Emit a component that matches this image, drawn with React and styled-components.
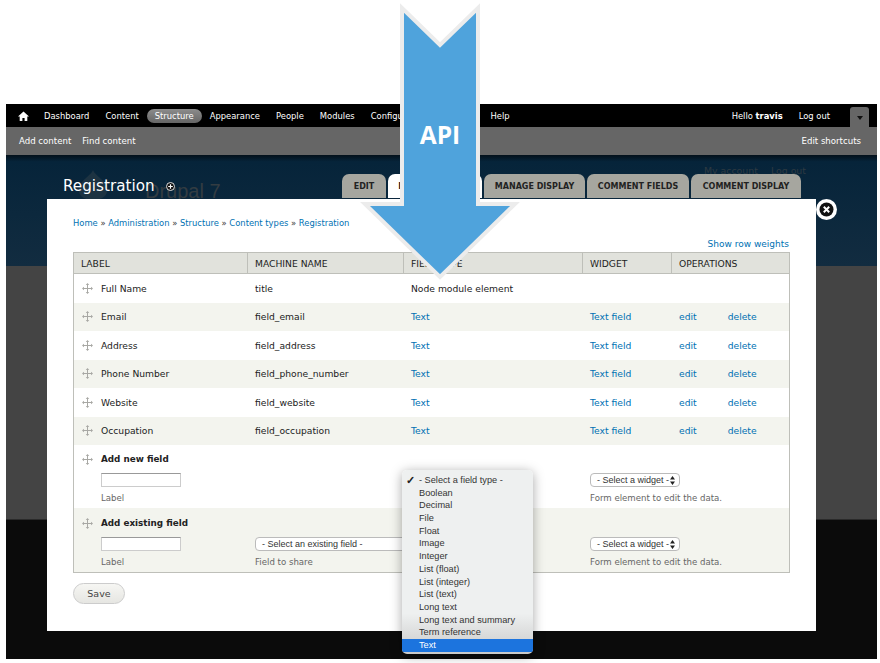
import React from "react";
import styled, { createGlobalStyle } from "styled-components";

const Global = createGlobalStyle`
  body {
    margin: 0;
    background: #fff;
    font-family: "DejaVu Sans", sans-serif;
  }
`;

const Page = styled.div`
  position: relative;
  width: 880px;
  height: 663px;
  padding: 104px 3px 4px 6px;
  box-sizing: border-box;
  overflow: hidden;
`;

const Frame = styled.div`
  position: relative;
  height: 555px;
  display: flex;
  flex-direction: column;
  background: #0b0b0b;
`;

const Toolbar = styled.div`
  height: 23px;
  flex: none;
  background: #000;
  display: flex;
  align-items: center;
  padding: 0 8px 0 12px;
  font-size: 8.4px;
  color: #fff;
`;

const NavItem = styled.span`
  padding: 2px 8px;
  margin-right: ${(p) => p.$gap || 0}px;
  border-radius: 9px;
  background: ${(p) => (p.$active ? "linear-gradient(#8c8c8c, #666)" : "none")};
`;

const Home = styled.span`
  display: flex;
  margin-right: 7px;
`;

const Spacer = styled.div`
  flex: 1;
`;

const ToggleBtn = styled.div`
  width: 19px;
  height: 20px;
  margin-left: 12px;
  margin-top: 3px;
  background: #666;
  border-radius: 3px 3px 0 0;
  display: flex;
  align-items: center;
  justify-content: center;
  &::after {
    content: "";
    border: 3px solid transparent;
    border-top: 4px solid #111;
    margin-top: 5px;
  }
`;

const Shortcuts = styled.div`
  height: 28px;
  flex: none;
  background: #666;
  display: flex;
  align-items: center;
  justify-content: space-between;
  padding: 0 16px 0 13px;
  font-size: 8.6px;
  color: #fff;
`;

const ShortcutLinks = styled.div`
  display: flex;
  gap: 11px;
`;

const Header = styled.div`
  position: relative;
  height: 111px;
  flex: none;
  background: linear-gradient(#03101a 0, #06243a 6%, #122c40 100%);
`;

const Title = styled.h1`
  position: absolute;
  left: 57px;
  top: 22px;
  margin: 0;
  font-size: 15.2px;
  font-weight: normal;
  color: #fff;
  display: flex;
  align-items: center;
  gap: 11px;
`;

const GhostLogo = styled.svg`
  position: absolute;
  left: 68px;
  top: 15px;
`;

const Ghost = styled.div`
  position: absolute;
  left: 139px;
  top: 25px;
  font-family: "Liberation Sans", sans-serif;
  font-size: 20px;
  color: #333c42;
`;

const GhostLinks = styled.div`
  position: absolute;
  right: 71px;
  top: 10px;
  display: flex;
  gap: 13px;
  font-size: 9.4px;
  color: #2e3a42;
`;

const Tabs = styled.div`
  position: absolute;
  left: 336px;
  top: 19px;
  display: flex;
  gap: 2px;
`;

const Tab = styled.div`
  width: ${(p) => p.$w}px;
  height: 24px;
  border-radius: 7px 7px 0 0;
  background: ${(p) => (p.$active ? "#fff" : "#a6a69f")};
  display: flex;
  align-items: center;
  justify-content: center;
  font-size: 8px;
  font-weight: bold;
  color: #222;
`;

const GrayBand = styled.div`
  height: 254px;
  flex: none;
  background: #444;
  border-bottom: 1px solid #2a2a2a;
  box-sizing: border-box;
`;

const Overlay = styled.div`
  position: absolute;
  left: 41px;
  top: 95px;
  width: 769px;
  height: 432px;
  box-sizing: border-box;
  background: #fff;
  padding: 18px 26px 0;
  color: #222;
  font-size: 9.2px;
`;

const Close = styled.div`
  position: absolute;
  right: -21px;
  top: 0;
  width: 21px;
  height: 21px;
  background: #fff;
  border-radius: 50%;
  display: flex;
  align-items: center;
  justify-content: center;
`;

const Crumbs = styled.div`
  color: #0071b3;
  height: 16px;
  font-size: 8.4px;
  line-height: 12px;
  i {
    font-style: normal;
    color: #333;
  }
`;

const Weights = styled.div`
  color: #0071b3;
  text-align: right;
  margin: 4px 1px 0 0;
  height: 15px;
  line-height: 15px;
  font-size: 9px;
`;

const Table = styled.div`
  border: 1px solid #bebfb9;
`;

const columns = "173px 156px 179px 89px 1fr";

const HeadRow = styled.div`
  display: grid;
  grid-template-columns: ${columns};
  height: 20px;
  background: #e1e2dc;
  border-bottom: 1px solid #bebfb9;
`;

const HeadCell = styled.div`
  display: flex;
  align-items: center;
  padding-left: 7px;
  border-left: ${(p) => (p.$first ? "none" : "1px solid #bebfb9")};
`;

const Row = styled.div`
  display: grid;
  grid-template-columns: ${columns};
  height: ${(p) => p.$h || 28.5}px;
  background: ${(p) => (p.$even ? "#f3f4ee" : "#fff")};
`;

const Cell = styled.div`
  display: flex;
  align-items: ${(p) => (p.$top ? "flex-start" : "center")};
  padding-left: 8px;
  color: ${(p) => (p.$link ? "#0071b3" : "inherit")};
`;

const LabelCell = styled(Cell)`
  gap: 8px;
`;

const AddCell = styled(Cell)`
  padding-left: 27px;
`;

const Ops = styled(Cell)`
  gap: 31px;
  color: #0071b3;
`;

const Stack = styled.div`
  display: flex;
  flex-direction: column;
  align-items: flex-start;
  padding-top: ${(p) => p.$pt || 8}px;
`;

const FieldTitle = styled.div`
  display: flex;
  align-items: center;
  gap: 8px;
  margin-left: -19px;
  font-weight: bold;
  font-size: 8.8px;
  height: 12px;
`;

const Input = styled.div`
  width: 80px;
  height: 14px;
  box-sizing: border-box;
  margin-top: 8px;
  background: #fff;
  border: 1px solid #ccc;
  border-top-color: #999;
`;

const Hint = styled.div`
  margin-top: 6px;
  font-size: 8.6px;
  color: #666;
  white-space: nowrap;
`;

const NativeSelect = styled.div`
  width: ${(p) => p.$w}px;
  height: 14px;
  margin-top: 20px;
  box-sizing: border-box;
  background: #fff;
  border: 1px solid #bbb;
  border-radius: 4px;
  display: flex;
  align-items: center;
  justify-content: space-between;
  padding: 0 4px 0 6px;
  font-family: "Liberation Sans", sans-serif;
  font-size: 9px;
  color: #333;
`;

const Save = styled.div`
  width: 52px;
  height: 21px;
  margin-top: 10px;
  box-sizing: border-box;
  border: 1px solid #ccc;
  border-radius: 11px;
  background: linear-gradient(#f6f6f3, #e6e6e2);
  display: flex;
  align-items: center;
  justify-content: center;
  font-size: 9.5px;
  color: #444;
`;

const Menu = styled.div`
  position: absolute;
  left: 396px;
  top: 366px;
  width: 131px;
  height: 184px;
  box-sizing: border-box;
  padding-top: 4px;
  border-radius: 5px;
  background: linear-gradient(#eef0f0 0, #eef0f0 78%, #c9c9c9 100%);
  box-shadow: 0 2px 12px rgba(0, 0, 0, 0.35);
  overflow: hidden;
  font-family: "Liberation Sans", sans-serif;
  font-size: 9.2px;
  color: #333;
`;

const MenuItem = styled.div`
  position: relative;
  height: 12.7px;
  line-height: 12.7px;
  padding-left: 17px;
  background: ${(p) => (p.$selected ? "#1c74de" : "none")};
  color: ${(p) => (p.$selected ? "#fff" : "inherit")};
`;

const Check = styled.span`
  position: absolute;
  left: 4px;
  top: 0;
  font-size: 11px;
  font-weight: bold;
  color: #222;
`;

const Arrow = styled.svg`
  position: absolute;
  left: 355px;
  top: 0;
`;

const ArrowLabel = styled.div`
  position: absolute;
  left: 401px;
  top: 118px;
  width: 78px;
  text-align: center;
  font-family: "Open Sans", sans-serif;
  font-weight: 700;
  font-size: 24.5px;
  color: #fff;
`;

const HomeIcon = () => (
  <svg width="11" height="10" viewBox="0 0 11 10" fill="#fff">
    <path d="M5.5 0.5 L11 5.5 H9.3 V10 H6.6 V7 H4.4 V10 H1.7 V5.5 H0 Z" />
  </svg>
);

const Move = () => (
  <svg width="11" height="11" viewBox="0 0 11 11" fill="#a8a8a4" style={{ flex: "none" }}>
    <path d="M5.5 0 L7.2 2 H6 V5 H9 V3.8 L11 5.5 L9 7.2 V6 H6 V9 H7.2 L5.5 11 L3.8 9 H5 V6 H2 V7.2 L0 5.5 L2 3.8 V5 H5 V2 H3.8 Z" />
  </svg>
);

const Updown = () => (
  <svg width="5" height="9" viewBox="0 0 5 9" fill="#222">
    <path d="M2.5 0 L5 3.5 H0 Z M2.5 9 L5 5.5 H0 Z" />
  </svg>
);

const rows = [
  ["Email", "field_email"],
  ["Address", "field_address"],
  ["Phone Number", "field_phone_number"],
  ["Website", "field_website"],
  ["Occupation", "field_occupation"],
];

const menuItems = [
  "Boolean",
  "Decimal",
  "File",
  "Float",
  "Image",
  "Integer",
  "List (float)",
  "List (integer)",
  "List (text)",
  "Long text",
  "Long text and summary",
  "Term reference",
];

const App = () => {
  return (
    <Page>
      <Global />
      <Frame>
        <Toolbar>
          <Home>
            <HomeIcon />
          </Home>
          <NavItem>Dashboard</NavItem>
          <NavItem>Content</NavItem>
          <NavItem $active>Structure</NavItem>
          <NavItem>Appearance</NavItem>
          <NavItem>People</NavItem>
          <NavItem>Modules</NavItem>
          <NavItem $gap={47}>Configuration</NavItem>
          <NavItem>Help</NavItem>
          <Spacer />
          <NavItem>
            Hello <b>travis</b>
          </NavItem>
          <NavItem>Log out</NavItem>
          <ToggleBtn />
        </Toolbar>
        <Shortcuts>
          <ShortcutLinks>
            <span>Add content</span>
            <span>Find content</span>
          </ShortcutLinks>
          <div>Edit shortcuts</div>
        </Shortcuts>
        <Header>
          <GhostLogo width="38" height="30" viewBox="0 0 38 30">
            <path d="M19 0 C21 6 33 10 33 21 C33 27 26 30 19 30 C12 30 5 27 5 21 C5 10 17 6 19 0 Z" fill="#1d3342" />
          </GhostLogo>
          <Ghost>Drupal 7</Ghost>
          <GhostLinks>
            <span>My account</span>
            <span>Log out</span>
          </GhostLinks>
          <Title>
            Registration
            <svg width="9" height="9" viewBox="0 0 9 9">
              <circle cx="4.5" cy="4.5" r="4" fill="#111" stroke="#ddd" />
              <path d="M4.5 2.2 V6.8 M2.2 4.5 H6.8" stroke="#fff" strokeWidth="1.2" />
            </svg>
          </Title>
          <Tabs>
            <Tab $w={44}>EDIT</Tab>
            <Tab $w={94} $active>
              MANAGE FIELDS
            </Tab>
            <Tab $w={101}>MANAGE DISPLAY</Tab>
            <Tab $w={102}>COMMENT FIELDS</Tab>
            <Tab $w={110}>COMMENT DISPLAY</Tab>
          </Tabs>
        </Header>
        <GrayBand />
        <Overlay>
          <Close>
            <svg width="15" height="15" viewBox="0 0 15 15">
              <circle cx="7.5" cy="7.5" r="7" fill="#111" />
              <path d="M4.8 4.8 L10.2 10.2 M10.2 4.8 L4.8 10.2" stroke="#fff" strokeWidth="2" />
            </svg>
          </Close>
          <Crumbs>
            Home <i>»</i> Administration <i>»</i> Structure <i>»</i> Content types <i>»</i> Registration
          </Crumbs>
          <Weights>Show row weights</Weights>
          <Table>
            <HeadRow>
              <HeadCell $first>LABEL</HeadCell>
              <HeadCell>MACHINE NAME</HeadCell>
              <HeadCell>FIELD TYPE</HeadCell>
              <HeadCell>WIDGET</HeadCell>
              <HeadCell>OPERATIONS</HeadCell>
            </HeadRow>
            <Row>
              <LabelCell>
                <Move />
                Full Name
              </LabelCell>
              <Cell>title</Cell>
              <Cell>Node module element</Cell>
              <Cell />
              <Cell />
            </Row>
            {rows.map((r, i) => (
              <Row key={r[1]} $even={i % 2 === 0}>
                <LabelCell>
                  <Move />
                  {r[0]}
                </LabelCell>
                <Cell>{r[1]}</Cell>
                <Cell $link>Text</Cell>
                <Cell $link>Text field</Cell>
                <Ops>
                  <span>edit</span>
                  <span>delete</span>
                </Ops>
              </Row>
            ))}
            <Row $h={63}>
              <AddCell $top>
                <Stack>
                  <FieldTitle>
                    <Move />
                    Add new field
                  </FieldTitle>
                  <Input />
                  <Hint>Label</Hint>
                </Stack>
              </AddCell>
              <Cell />
              <Cell />
              <Cell $top>
                <Stack>
                  <NativeSelect $w={90}>
                    - Select a widget - <Updown />
                  </NativeSelect>
                  <Hint>Form element to edit the data.</Hint>
                </Stack>
              </Cell>
              <Cell />
            </Row>
            <Row $h={64} $even>
              <AddCell $top>
                <Stack $pt={9}>
                  <FieldTitle>
                    <Move />
                    Add existing field
                  </FieldTitle>
                  <Input />
                  <Hint>Label</Hint>
                </Stack>
              </AddCell>
              <Cell $top>
                <Stack $pt={9}>
                  <NativeSelect $w={160}>- Select an existing field -</NativeSelect>
                  <Hint>Field to share</Hint>
                </Stack>
              </Cell>
              <Cell />
              <Cell $top>
                <Stack $pt={9}>
                  <NativeSelect $w={90}>
                    - Select a widget - <Updown />
                  </NativeSelect>
                  <Hint>Form element to edit the data.</Hint>
                </Stack>
              </Cell>
              <Cell />
            </Row>
          </Table>
          <Save>Save</Save>
        </Overlay>
        <Menu>
          <MenuItem>
            <Check>✓</Check>- Select a field type -
          </MenuItem>
          {menuItems.map((m) => (
            <MenuItem key={m}>{m}</MenuItem>
          ))}
          <MenuItem $selected>Text</MenuItem>
        </Menu>
      </Frame>
      <Arrow width="170" height="285" viewBox="0 0 170 285">
        <path
          d="M47 8 L85 45 L123 8 V204 H160 L85 277 L10 204 H47 Z"
          fill="#4fa3dc"
          stroke="#ececec"
          strokeWidth="4"
        />
      </Arrow>
      <ArrowLabel>API</ArrowLabel>
    </Page>
  );
};

export default App;
